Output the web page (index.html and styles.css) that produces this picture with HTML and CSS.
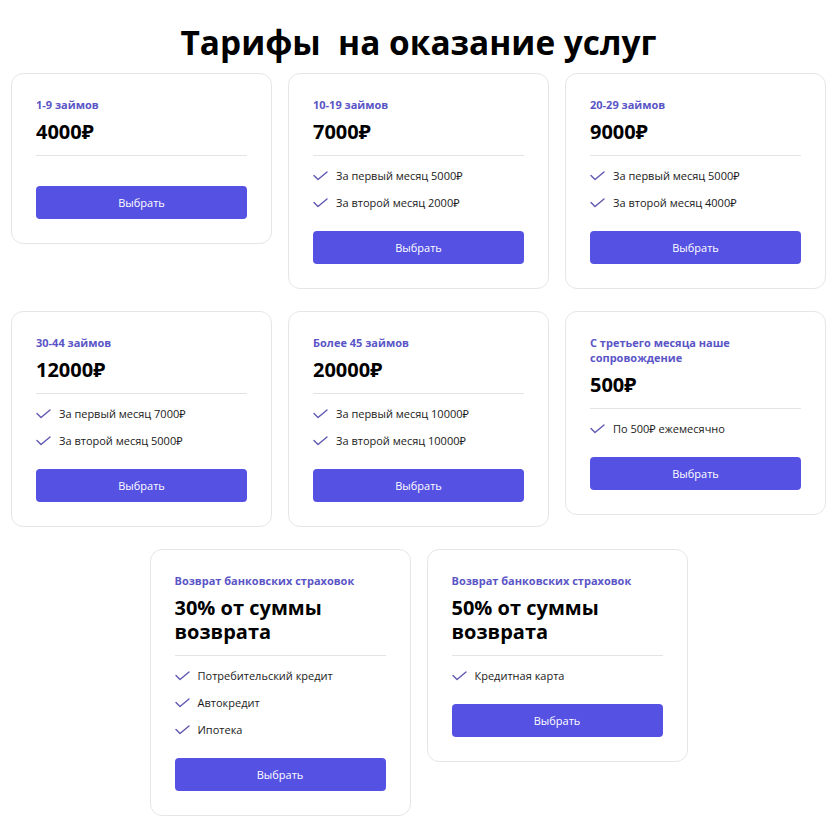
FILE: index.html
```html
<!DOCTYPE html>
<html lang="ru">
<head>
<meta charset="utf-8">
<link rel="stylesheet" href="styles.css">
</head>
<body>
<main class="page">
  <h1 class="title">Тарифы&nbsp; на оказание услуг</h1>
  <div class="grid">
    <section class="card">
      <div class="label">1-9 займов</div>
      <div class="price">4000₽</div>
      <hr class="divider">
      <ul class="features features--empty"></ul>
      <button class="btn">Выбрать</button>
    </section>
    <section class="card">
      <div class="label">10-19 займов</div>
      <div class="price">7000₽</div>
      <hr class="divider">
      <ul class="features">
        <li><svg class="check" viewBox="0 0 15 10"><polyline points="1,4.5 5,8.5 14,1"/></svg>За первый месяц 5000₽</li>
        <li><svg class="check" viewBox="0 0 15 10"><polyline points="1,4.5 5,8.5 14,1"/></svg>За второй месяц 2000₽</li>
      </ul>
      <button class="btn">Выбрать</button>
    </section>
    <section class="card">
      <div class="label">20-29 займов</div>
      <div class="price">9000₽</div>
      <hr class="divider">
      <ul class="features">
        <li><svg class="check" viewBox="0 0 15 10"><polyline points="1,4.5 5,8.5 14,1"/></svg>За первый месяц 5000₽</li>
        <li><svg class="check" viewBox="0 0 15 10"><polyline points="1,4.5 5,8.5 14,1"/></svg>За второй месяц 4000₽</li>
      </ul>
      <button class="btn">Выбрать</button>
    </section>
    <section class="card">
      <div class="label">30-44 займов</div>
      <div class="price">12000₽</div>
      <hr class="divider">
      <ul class="features">
        <li><svg class="check" viewBox="0 0 15 10"><polyline points="1,4.5 5,8.5 14,1"/></svg>За первый месяц 7000₽</li>
        <li><svg class="check" viewBox="0 0 15 10"><polyline points="1,4.5 5,8.5 14,1"/></svg>За второй месяц 5000₽</li>
      </ul>
      <button class="btn">Выбрать</button>
    </section>
    <section class="card">
      <div class="label">Более 45 займов</div>
      <div class="price">20000₽</div>
      <hr class="divider">
      <ul class="features">
        <li><svg class="check" viewBox="0 0 15 10"><polyline points="1,4.5 5,8.5 14,1"/></svg>За первый месяц 10000₽</li>
        <li><svg class="check" viewBox="0 0 15 10"><polyline points="1,4.5 5,8.5 14,1"/></svg>За второй месяц 10000₽</li>
      </ul>
      <button class="btn">Выбрать</button>
    </section>
    <section class="card">
      <div class="label label--wrap">С третьего месяца наше сопровождение</div>
      <div class="price">500₽</div>
      <hr class="divider">
      <ul class="features">
        <li><svg class="check" viewBox="0 0 15 10"><polyline points="1,4.5 5,8.5 14,1"/></svg>По 500₽ ежемесячно</li>
      </ul>
      <button class="btn">Выбрать</button>
    </section>
    <section class="card">
      <div class="label">Возврат банковских страховок</div>
      <div class="price price--wrap">30% от суммы возврата</div>
      <hr class="divider">
      <ul class="features">
        <li><svg class="check" viewBox="0 0 15 10"><polyline points="1,4.5 5,8.5 14,1"/></svg>Потребительский кредит</li>
        <li><svg class="check" viewBox="0 0 15 10"><polyline points="1,4.5 5,8.5 14,1"/></svg>Автокредит</li>
        <li><svg class="check" viewBox="0 0 15 10"><polyline points="1,4.5 5,8.5 14,1"/></svg>Ипотека</li>
      </ul>
      <button class="btn">Выбрать</button>
    </section>
    <section class="card">
      <div class="label">Возврат банковских страховок</div>
      <div class="price price--wrap">50% от суммы возврата</div>
      <hr class="divider">
      <ul class="features">
        <li><svg class="check" viewBox="0 0 15 10"><polyline points="1,4.5 5,8.5 14,1"/></svg>Кредитная карта</li>
      </ul>
      <button class="btn">Выбрать</button>
    </section>
  </div>
</main>
</body>
</html>
```

FILE: styles.css
```css
* { box-sizing: border-box; }
html, body { margin: 0; padding: 0; background: #ffffff; }
body {
  font-family: "Open Sans", "Noto Sans", "Liberation Sans", sans-serif;
  color: #111;
}
.page {
  width: 815px;
  margin-left: 11px;
  padding-top: 22px;
}
.title {
  margin: 0 0 11px;
  text-align: center;
  font-size: 33.4px;
  line-height: 40px;
  font-weight: 700;
  color: #000;
}
.grid {
  display: flex;
  flex-wrap: wrap;
  justify-content: center;
  align-items: flex-start;
  column-gap: 16px;
  row-gap: 22px;
}
.card {
  width: 261px;
  border: 1px solid #e6e6e6;
  border-radius: 12px;
  padding: 23px 24px 24px;
  background: #fff;
}
.label {
  font-size: 11px;
  line-height: 15px;
  font-weight: 700;
  color: #5a55c6;
}
.label--wrap { max-width: 150px; }
.price {
  margin-top: 8px;
  font-size: 20px;
  line-height: 24px;
  font-weight: 700;
  color: #000;
}
.price--wrap { max-width: 190px; }
.divider {
  margin: 11px 0 0;
  border: 0;
  border-top: 1px solid #e4e4e4;
  height: 0;
}
.features {
  list-style: none;
  margin: 0;
  padding: 12px 0 20px;
  display: flex;
  flex-direction: column;
  gap: 11px;
}
.features--empty { padding: 0; height: 30px; }
.features li {
  display: flex;
  align-items: center;
  font-size: 11px;
  line-height: 16px;
  height: 16px;
  color: #1a1a1a;
}
.check {
  width: 15px;
  height: 10px;
  margin-right: 8px;
  flex: none;
  fill: none;
  stroke: #5e58b0;
  stroke-width: 1.4;
  stroke-linecap: round;
  stroke-linejoin: round;
}
.btn {
  display: block;
  width: 100%;
  height: 33px;
  margin: 0;
  border: 0;
  border-radius: 4px;
  background: #5551e3;
  color: #fff;
  font-family: inherit;
  font-size: 11px;
  cursor: pointer;
}
```
